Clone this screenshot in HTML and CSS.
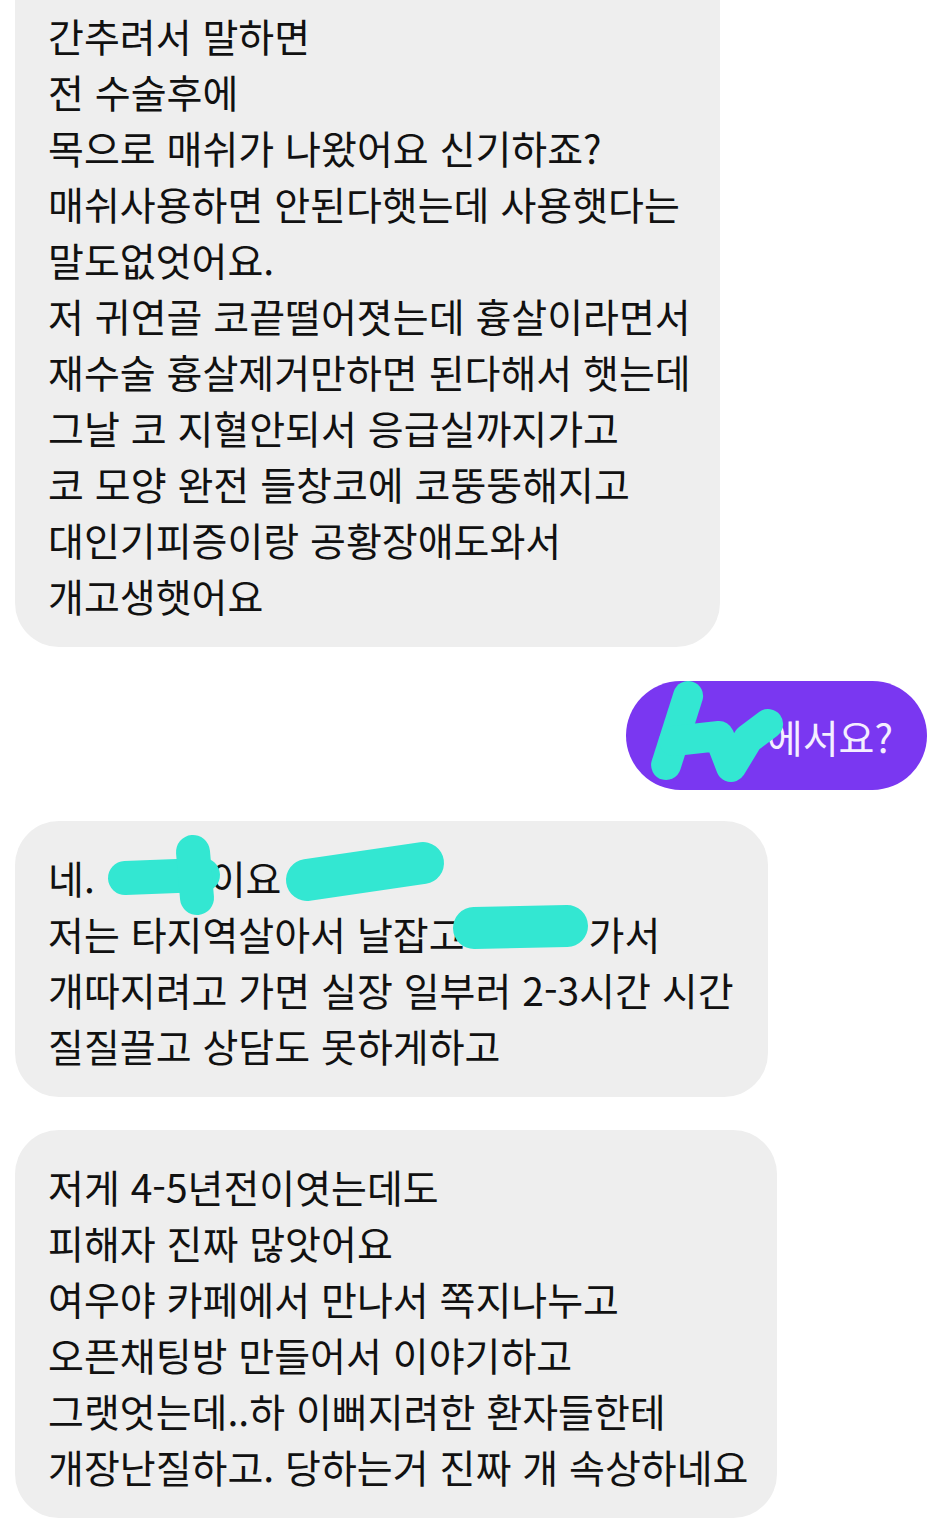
FILE: index.html
```html
<!DOCTYPE html>
<html lang="ko">
<head>
    <meta charset="UTF-8">
    <meta name="viewport" content="width=device-width, initial-scale=1.0">
    <title>대화</title>
    <link rel="stylesheet" href="styles.css">
</head>
<body>

<div class="chat">
    <!-- received -->
    <div class="bubble bubble-in first">
        간추려서 말하면<br>
        전 수술후에<br>
        목으로 매쉬가 나왔어요 신기하죠?<br>
        매쉬사용하면 안된다햇는데 사용햇다는<br>
        말도없엇어요.<br>
        저 귀연골 코끝떨어졋는데 흉살이라면서<br>
        재수술 흉살제거만하면 된다해서 햇는데<br>
        그날 코 지혈안되서 응급실까지가고<br>
        코 모양 완전 들창코에 코뚱뚱해지고<br>
        대인기피증이랑 공황장애도와서<br>
        개고생햇어요
    </div>

    <!-- sent -->
    <div class="bubble bubble-out">
        <span class="masked mask-clinic">병원</span>에서요?
        <svg class="scribble" viewBox="0 0 301 109">
            <path d="M62 15 L40 84"/>
            <path d="M48 60 L93 55 L105 86 L122 58 L142 43"/>
        </svg>
    </div>

    <div class="bubble bubble-in second">
        네. <span class="masked mask-a">병원</span>이요 <span class="masked mask-b">지점</span><br>
        저는 타지역살아서 날잡고<span class="masked mask-c">지점</span>가서<br>
        개따지려고 가면 실장 일부러 2-3시간 시간<br>
        질질끌고 상담도 못하게하고
        <svg class="scribble" viewBox="0 0 753 274">
            <path d="M110 56 L188 53"/>
            <path d="M178 30 L182 76"/>
            <path class="wide" d="M292 58 L408 41"/>
            <path class="wide" d="M459 106 L552 104"/>
        </svg>
    </div>

    <div class="bubble bubble-in third">
        저게 4-5년전이엿는데도<br>
        피해자 진짜 많앗어요<br>
        여우야 카페에서 만나서 쪽지나누고<br>
        오픈채팅방 만들어서 이야기하고<br>
        그랫엇는데..하 이뻐지려한 환자들한테<br>
        개장난질하고. 당하는거 진짜 개 속상하네요
    </div>
</div>

</body>
</html>
```

FILE: styles.css
```css
/* General Styling */
body {
    background-color: #ffffff;
    margin: 0;
    font-family: "Noto Sans CJK KR", "Noto Sans", sans-serif;
    color: #111111;
}

/* Chat column */
.chat {
    display: flex;
    flex-direction: column;
    align-items: flex-start;
    padding: 0 21px 0 15px;
}

/* Bubbles */
.bubble {
    position: relative;
    font-size: 39px;
    line-height: 56px;
    white-space: nowrap;
    box-sizing: border-box;
}

.bubble-in {
    background-color: #eeeeee;
    border-radius: 44px;
    padding: 28px 32px 24px 33px;
}

.bubble-out {
    align-self: flex-end;
    background-color: #7a37f1;
    color: #f4efff;
    border-radius: 56px;
    padding: 27px 34px 26px 31px;
    margin: 34px 0 31px;
}

.first {
    width: 705px;
    margin-top: -21px;
    border-radius: 0 0 44px 44px;
}

.second {
    width: 753px;
    margin-bottom: 33px;
}

.third {
    width: 762px;
}

/* Text hidden under the redaction marks */
.masked {
    display: inline-block;
    color: transparent;
    overflow: hidden;
    vertical-align: top;
}

.mask-clinic {
    width: 110px;
}

.mask-a {
    width: 104px;
}

.mask-b {
    width: 150px;
}

.mask-c {
    width: 124px;
}

/* Teal redaction marks */
.scribble {
    position: absolute;
    left: 0;
    top: 0;
    width: 100%;
    height: 100%;
    overflow: visible;
    pointer-events: none;
}

.scribble path {
    fill: none;
    stroke: #33e7d2;
    stroke-width: 30;
    stroke-linecap: round;
    stroke-linejoin: round;
}

.second .scribble path {
    stroke-width: 34;
}

.second .scribble path.wide {
    stroke-width: 42;
}
```
